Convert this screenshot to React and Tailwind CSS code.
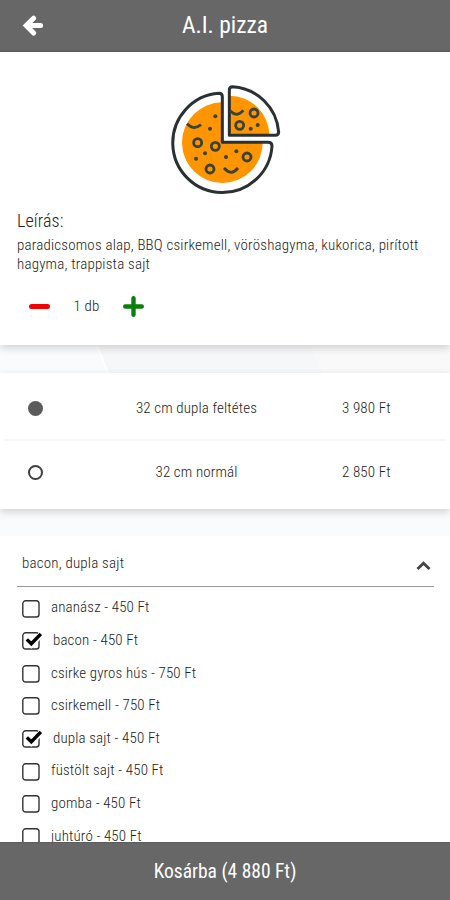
import React, { useState } from "react";

const variants = [
    { name: "32 cm dupla feltétes", price: "3 980 Ft" },
    { name: "32 cm normál", price: "2 850 Ft" },
];

const toppings = [
    { name: "ananász", price: 450 },
    { name: "bacon", price: 450 },
    { name: "csirke gyros hús", price: 750 },
    { name: "csirkemell", price: 750 },
    { name: "dupla sajt", price: 450 },
    { name: "füstölt sajt", price: 450 },
    { name: "gomba", price: 450 },
    { name: "juhtúró", price: 450 },
];

const PizzaLogo = () => (
    <svg className="mx-auto h-[140px] w-[150px]" viewBox="0 0 450 420" fill="none">
        <path d="M217 217V97A121 121 0 1 0 338 217Z" fill="#ff9500" />
        <path d="M238 196V77A120 120 0 0 1 358 196Z" fill="#ff9500" />
        <g stroke="#2b3133" strokeWidth="9" strokeLinejoin="round" strokeLinecap="round">
            <path d="M217 217V80Q217 70 207 70A149 149 0 1 0 366 228Q366 217 354 217Z" />
            <path d="M238 196V60Q238 50 248 50A148 148 0 0 1 386 186Q386 196 376 196Z" />
        </g>
        <g stroke="#39423c" strokeWidth="8.5">
            <circle cx="143" cy="218" r="12" />
            <circle cx="196" cy="229" r="12" />
            <circle cx="180" cy="297" r="12" />
            <circle cx="291" cy="261" r="12" />
            <circle cx="269" cy="166" r="12" />
            <circle cx="312" cy="129" r="12" />
            <path d="M111 161Q122 172 132 173Q143 172 153 164" />
            <path d="M222 294Q233 306 243 307Q254 306 264 294" />
            <path d="M240 122Q250 132 260 133Q270 132 280 121" />
        </g>
        <g fill="#39423c">
            <circle cx="196" cy="139" r="6" />
            <circle cx="180" cy="176" r="6" />
            <circle cx="165" cy="250" r="6" />
            <circle cx="138" cy="266" r="6" />
            <circle cx="228" cy="261" r="6" />
            <circle cx="259" cy="244" r="6" />
            <circle cx="302" cy="176" r="6" />
            <circle cx="323" cy="165" r="6" />
        </g>
    </svg>
);

const Checkbox = ({ checked }) => (
    <svg className="h-[18px] w-5 shrink-0" viewBox="0 0 20 18" fill="none">
        <rect x="0.8" y="0.8" width="16.2" height="16.2" rx="2.8" stroke="#333" strokeWidth="1.4" />
        {checked && <path d="M5 8.5L9.3 12.6L19.5 2" stroke="#fff" strokeWidth="6" />}
        {checked && <path d="M4.8 7.4L9.3 11.8L18.9 2" stroke="#000" strokeWidth="3.4" />}
    </svg>
);

const App = () => {
    const [count, setCount] = useState(1);
    const [variant, setVariant] = useState(0);
    const [selected, setSelected] = useState(["bacon", "dupla sajt"]);

    const toggle = (name) => {
        setSelected(selected.includes(name) ? selected.filter((s) => s !== name) : [...selected, name]);
    };

    return (
        <div className="flex h-[900px] w-[450px] flex-col overflow-hidden bg-[#fafbfc] font-['Roboto',sans-serif] text-[15px] font-[340] tracking-[0.13px] font-stretch-condensed text-[#222]">
            <header className="grid h-[52px] shrink-0 grid-cols-[66px_1fr_66px] items-center border-b border-[#5c5c5c] bg-[#676767] text-white">
                <button className="pl-[22px]">
                    <svg className="h-[22px] w-[22px]" viewBox="0 0 22 22" fill="none" stroke="#fff" strokeWidth="5">
                        <path d="M11.6 3.2L4.2 10.6L11.6 18" strokeLinecap="round" />
                        <path d="M5 10.6H18.6" strokeLinecap="round" />
                    </svg>
                </button>
                <h1 className="pt-px text-center text-[23.5px] font-normal tracking-normal">A.I. pizza</h1>
            </header>

            <section className="relative h-[293px] shrink-0 bg-white pt-[18px] shadow-[0_3px_8px_rgba(0,0,0,0.17)]">
                <PizzaLogo />
                <div className="px-[17px]">
                    <h2 className="text-lg leading-[22px]">Leírás:</h2>
                    <p className="mt-1 leading-[19px] tracking-[0.19px] whitespace-nowrap">
                        paradicsomos alap, BBQ csirkemell, vöröshagyma, kukorica, pirított
                        <br />
                        hagyma, trappista sajt
                    </p>
                </div>
                <div className="mt-[21px] flex h-[22px] items-center pl-[29px]">
                    <button className="h-[5px] w-[21px] rounded-sm bg-[#f00505]" onClick={() => setCount(Math.max(1, count - 1))} />
                    <span className="w-[73px] text-center">{count} db</span>
                    <button onClick={() => setCount(count + 1)}>
                        <svg className="h-[21px] w-[21px]" viewBox="0 0 21 21" stroke="#0a800a" strokeWidth="4.4" strokeLinecap="round">
                            <path d="M10.5 2.2V18.8M2.2 10.5H18.8" />
                        </svg>
                    </button>
                </div>
            </section>

            {/* faceted backdrop showing between the cards */}
            <div className="h-7 shrink-0">
                <svg className="h-full w-full" viewBox="0 0 450 28">
                    <path d="M97 0H450V28H108Z" fill="#f6f7f8" />
                    <path d="M97 0L108 28" stroke="#fff" strokeWidth="1.6" />
                    <path d="M310 0L322 28H450V0Z" fill="#f9f9fa" />
                </svg>
            </div>

            <section className="h-[136px] shrink-0 bg-white shadow-[0_3px_8px_rgba(0,0,0,0.17)]">
                {variants.map((item, index) => (
                    <div
                        key={item.name}
                        className="mx-1 grid h-[68px] grid-cols-[62px_261px_1fr] items-center border-[#f7f7f7] pt-1 first:border-b-2 last:h-[62px] last:pt-0"
                        onClick={() => setVariant(index)}
                    >
                        {variant === index ? (
                            <span className="ml-6 h-[15px] w-[15px] rounded-full bg-[#5b5b5b]" />
                        ) : (
                            <span className="ml-6 h-[15px] w-[15px] rounded-full border-2 border-[#3f3f3f]" />
                        )}
                        <span className="text-center">{item.name}</span>
                        <span className="pl-[15px]">{item.price}</span>
                    </div>
                ))}
            </section>

            <section className="mt-[27px] min-h-0 flex-1 overflow-hidden bg-white pr-4 pl-[17px]">
                <div className="flex h-[51px] items-center justify-between border-b border-[#999] pr-[3px] pl-[5px]">
                    <span className="pt-1 tracking-[0.2px]">{selected.join(", ")}</span>
                    <svg className="mt-2 h-[9px] w-[15px]" viewBox="0 0 15 9" fill="none" stroke="#444" strokeWidth="2.8">
                        <path d="M1.5 8L7.5 2.2L13.5 8" />
                    </svg>
                </div>
                <div className="pt-[4.4px] pl-[5px]">
                    {toppings.map((item) => {
                        const checked = selected.includes(item.name);
                        return (
                            <div key={item.name} className="flex h-[32.6px] items-center" onClick={() => toggle(item.name)}>
                                <div className="pt-0.5">
                                    <Checkbox checked={checked} />
                                </div>
                                <span className={checked ? "pl-[11px]" : "pl-[9px]"}>
                                    {item.name} - {item.price} Ft
                                </span>
                            </div>
                        );
                    })}
                </div>
            </section>

            <footer className="flex h-[58px] shrink-0 items-center justify-center border-t border-[#5c5c5c] bg-[#676767] pt-px text-[19.5px] font-normal tracking-normal text-white">
                Kosárba (4 880 Ft)
            </footer>
        </div>
    );
};

export default App;
